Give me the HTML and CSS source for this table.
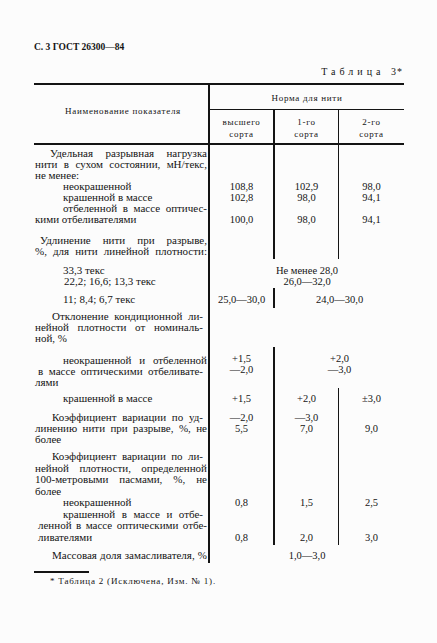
FILE: index.html
```html
<!DOCTYPE html>
<html lang="ru">
<head>
<meta charset="utf-8">
<title>ГОСТ 26300—84, таблица 3</title>
<link rel="stylesheet" href="styles.css">
</head>
<body>
<div class="page">
  <div class="running-head">С. 3 ГОСТ 26300—84</div>
  <div class="caption">Таблица <span class="num">3*</span></div>

  <div class="table">
    <div class="thead">
      <div class="th th-name">Наименование показателя</div>
      <div class="th norm">Норма для нити</div>
      <div class="th sub bk">высшего<br>сорта</div>
      <div class="th sub bk">1-го<br>сорта</div>
      <div class="th sub bt">2-го<br>сорта</div>
    </div>

    <div class="row r1">
      <div class="label">
        <span class="l j i15">Удельная разрывная нагрузка</span>
        <span class="l j">нити в сухом состоянии, мН/текс,</span>
        <span class="l">не менее:</span>
        <span class="l i28">неокрашенной</span>
        <span class="l i28">крашенной в массе</span>
        <span class="l j i28">отбеленной в массе оптичес-</span>
        <span class="l">кими отбеливателями</span>
      </div>
      <div class="val bk"><br><br><br>108,8<br>102,8<br><br>100,0</div>
      <div class="val bk"><br><br><br>102,9<br>98,0<br><br>98,0</div>
      <div class="val bt"><br><br><br>98,0<br>94,1<br><br>94,1</div>
    </div>

    <div class="row r2">
      <div class="label">
        <span class="l j i5">Удлинение нити при разрыве,</span>
        <span class="l j">%, для нити линейной плотности:</span>
      </div>
      <div class="val bk"></div>
      <div class="val bk"></div>
      <div class="val bt"></div>
    </div>

    <div class="row r3">
      <div class="label">
        <span class="l i28">33,3 текс</span>
        <span class="l i29">22,2; 16,6; 13,3 текс</span>
      </div>
      <div class="val bk s3">Не менее 28,0<br>26,0—32,0</div>
    </div>

    <div class="row r4">
      <div class="label">
        <span class="l i28">11; 8,4; 6,7 текс</span>
      </div>
      <div class="val bk">25,0—30,0</div>
      <div class="val bk s2">24,0—30,0</div>
    </div>

    <div class="row r5">
      <div class="label">
        <span class="l j i17 nr4">Отклонение кондиционной ли-</span>
        <span class="l j nr4">нейной плотности от номиналь-</span>
        <span class="l">ной, %</span>
      </div>
      <div class="val bk s3"></div>
    </div>

    <div class="row r6">
      <div class="label">
        <span class="l j i28">неокрашенной и отбеленной</span>
        <span class="l j i3 nr4">в массе оптическими отбеливате-</span>
        <span class="l">лями</span>
      </div>
      <div class="val bk">+1,5<br>—2,0</div>
      <div class="val bk s2">+2,0<br>—3,0</div>
    </div>

    <div class="row r7">
      <div class="label">
        <span class="l i28">крашенной в массе</span>
      </div>
      <div class="val bk">+1,5</div>
      <div class="val bk">+2,0</div>
      <div class="val bt">±3,0</div>
    </div>

    <div class="row r8">
      <div class="label">
        <span class="l j i17 nr4">Коэффициент вариации по уд-</span>
        <span class="l j">линению нити при разрыве, %, не</span>
        <span class="l">более</span>
      </div>
      <div class="val bk">—2,0<br>5,5</div>
      <div class="val bk">—3,0<br>7,0</div>
      <div class="val bt"><br>9,0</div>
    </div>

    <div class="row r9">
      <div class="label">
        <span class="l j i17 nr4">Коэффициент вариации по ли-</span>
        <span class="l j">нейной плотности, определенной</span>
        <span class="l j">100-метровыми пасмами, %, не</span>
        <span class="l">более</span>
        <span class="l i28">неокрашенной</span>
        <span class="l j i28 nr4">крашенной в массе и отбе-</span>
        <span class="l j i3">ленной в массе оптическими отбе-</span>
        <span class="l i3">ливателями</span>
      </div>
      <div class="val bk"><br><br><br><br>0,8<br><br><br>0,8</div>
      <div class="val bk"><br><br><br><br>1,5<br><br><br>2,0</div>
      <div class="val bt"><br><br><br><br>2,5<br><br><br>3,0</div>
    </div>

    <div class="row r10">
      <div class="label">
        <span class="l j i17">Массовая доля замасливателя, %</span>
      </div>
      <div class="val bk s3">1,0—3,0</div>
    </div>
  </div>

  <div class="foot-rule"></div>
  <p class="footnote">* Таблица 2 (Исключена, Изм. № 1).</p>
</div>
</body>
</html>
```

FILE: styles.css
```css
* {
  box-sizing: border-box;
  margin: 0;
  padding: 0;
}

html,
body {
  background: #fcfcfc;
}

body {
  margin: 0;
  font-family: "Liberation Serif", "Times New Roman", serif;
  color: #141414;
}

.page {
  width: 437px;
  height: 643px;
  padding: 41px 33px 0 34px;
}

.running-head {
  font-weight: bold;
  font-size: 9.5px;
  line-height: 12px;
}

.caption {
  margin-top: 13px;
  padding-right: 1px;
  text-align: right;
  font-size: 10px;
  line-height: 12px;
  letter-spacing: 4px;
}

.caption .num {
  letter-spacing: 1px;
}

/* ---------- table ---------- */

.table {
  width: 370px;
  margin-top: 5px;
  border-top: 2px solid #141414;
}

.thead {
  display: grid;
  grid-template-columns: 174px 65px 65px 66px;
  grid-template-rows: 25px 33px;
  border-bottom: 2px solid #141414;
  font-size: 9px;
  letter-spacing: 0.7px;
}

.th {
  text-align: center;
}

.th-name {
  grid-row: 1 / 3;
  grid-column: 1;
  padding-top: 21px;
  padding-left: 4px;
  line-height: 11px;
}

.norm {
  grid-column: 2 / 5;
  display: flex;
  align-items: center;
  justify-content: center;
  padding-top: 2px;
  border-left: 2px solid #141414;
  border-bottom: 1px solid #141414;
}

.sub {
  padding-top: 6px;
  line-height: 12px;
}

.row {
  display: grid;
  grid-template-columns: 174px 65px 65px 66px;
  font-size: 10.5px;
  line-height: 11px;
}

.label {
  padding-left: 1px;
  padding-right: 1px;
  font-size: 11px;
}

.val {
  text-align: center;
  border-left: 2px solid transparent;
}

.bk {
  border-left: 2px solid #141414;
}

.bt {
  border-left: 1px solid #141414;
}

.s2 {
  grid-column: span 2;
}

.s3 {
  grid-column: span 3;
}

.l {
  display: block;
}

.j {
  text-align: justify;
  text-align-last: justify;
}

.i3 { padding-left: 3px; }
.i5 { padding-left: 5px; }
.i15 { padding-left: 15px; }
.i17 { padding-left: 17px; }
.i28 { padding-left: 28px; }
.i29 { padding-left: 29px; }
.nr4 { padding-right: 4px; }

/* row spacing */
.r1 > * { padding-top: 2.5px; }
.r2 > * { padding-top: 10px; padding-bottom: 2.5px; }
.r3 > * { padding-top: 5.5px; padding-bottom: 1.5px; }
.r4 > * { padding-top: 5.5px; padding-bottom: 3.5px; }
.r5 > * { padding-top: 2.5px; padding-bottom: 3.5px; }
.r6 > * { padding-top: 7.5px; padding-bottom: 0.5px; }
.r6 > .val { padding-top: 5.5px; }
.r7 > * { padding-top: 4.5px; padding-bottom: 4.5px; }
.r8 > * { padding-top: 3.5px; padding-bottom: 3.5px; }
.r9 { line-height: 11.5px; }
.r9 > * { padding-top: 3.25px; padding-bottom: 1.75px; }
.r10 > * { padding-top: 4.5px; padding-bottom: 2.5px; }

/* ---------- footnote ---------- */

.foot-rule {
  width: 55px;
  margin-top: 8px;
  border-top: 2px solid #141414;
}

.footnote {
  margin-top: 2.5px;
  padding-left: 16px;
  font-size: 9px;
  line-height: 11px;
  letter-spacing: 0.8px;
}
```
